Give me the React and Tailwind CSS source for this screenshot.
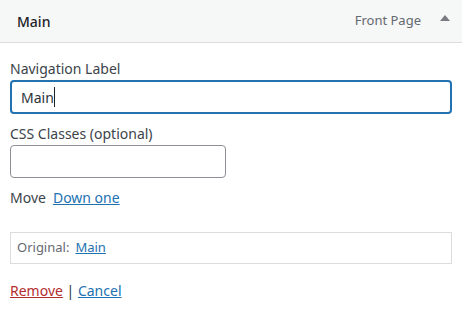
import React from 'react'

export default function App(){
  return (
    <div className="w-[462px] h-[320px] bg-white text-[14px] text-[#3c434a]" style={{fontFamily: '"Noto Sans", "Open Sans", sans-serif'}}>
      <div className="h-[43px] bg-[#f6f7f7] border-b border-[#dcdcde] flex items-center pl-[17px] pr-[7px]">
        <span className="flex-1 text-[#1d2327] font-medium">Main</span>
        <span className="text-[13px] text-[#646970] mr-[2px]">Front Page</span>
        <svg width="20" height="20" viewBox="0 0 20 20" className="ml-[12px] mb-[5px]">
          <path d="M5 12 L10 6 L15 12 Z" fill="#787c82" />
        </svg>
      </div>
      <div className="px-[10px] pt-[16px]">
        <label className="block leading-[20px]">Navigation Label</label>
        <div className="mt-[1px] h-[34px] w-full border-2 border-[#2271b1] rounded-[4px] flex items-center px-[9px] text-[#2c3338]">
          Main<span className="w-px h-[20px] bg-[#1d2327]"></span>
        </div>
        <label className="block mt-[10px] leading-[20px]">CSS Classes (optional)</label>
        <div className="mt-[1px] h-[33px] w-[216px] border border-[#8c8f94] rounded-[4px]"></div>
        <div className="mt-[10px] flex items-center gap-[7px] leading-[20px]">
          <span>Move</span>
          <a href="#" className="text-[#2271b1] underline">Down one</a>
        </div>
        <div className="mt-[24px] h-[32px] border border-[#dcdcde] flex items-center px-[6px] text-[13px]">
          <span className="text-[#646970]">Original:</span>
          <a href="#" className="ml-[6px] text-[#2271b1] underline">Main</a>
        </div>
        <div className="mt-[17px] leading-[20px]">
          <a href="#" className="text-[#b32d2e] underline">Remove</a>
          <span className="text-[#2c3338]"> | </span>
          <a href="#" className="text-[#2271b1] underline">Cancel</a>
        </div>
      </div>
    </div>
  )
}
